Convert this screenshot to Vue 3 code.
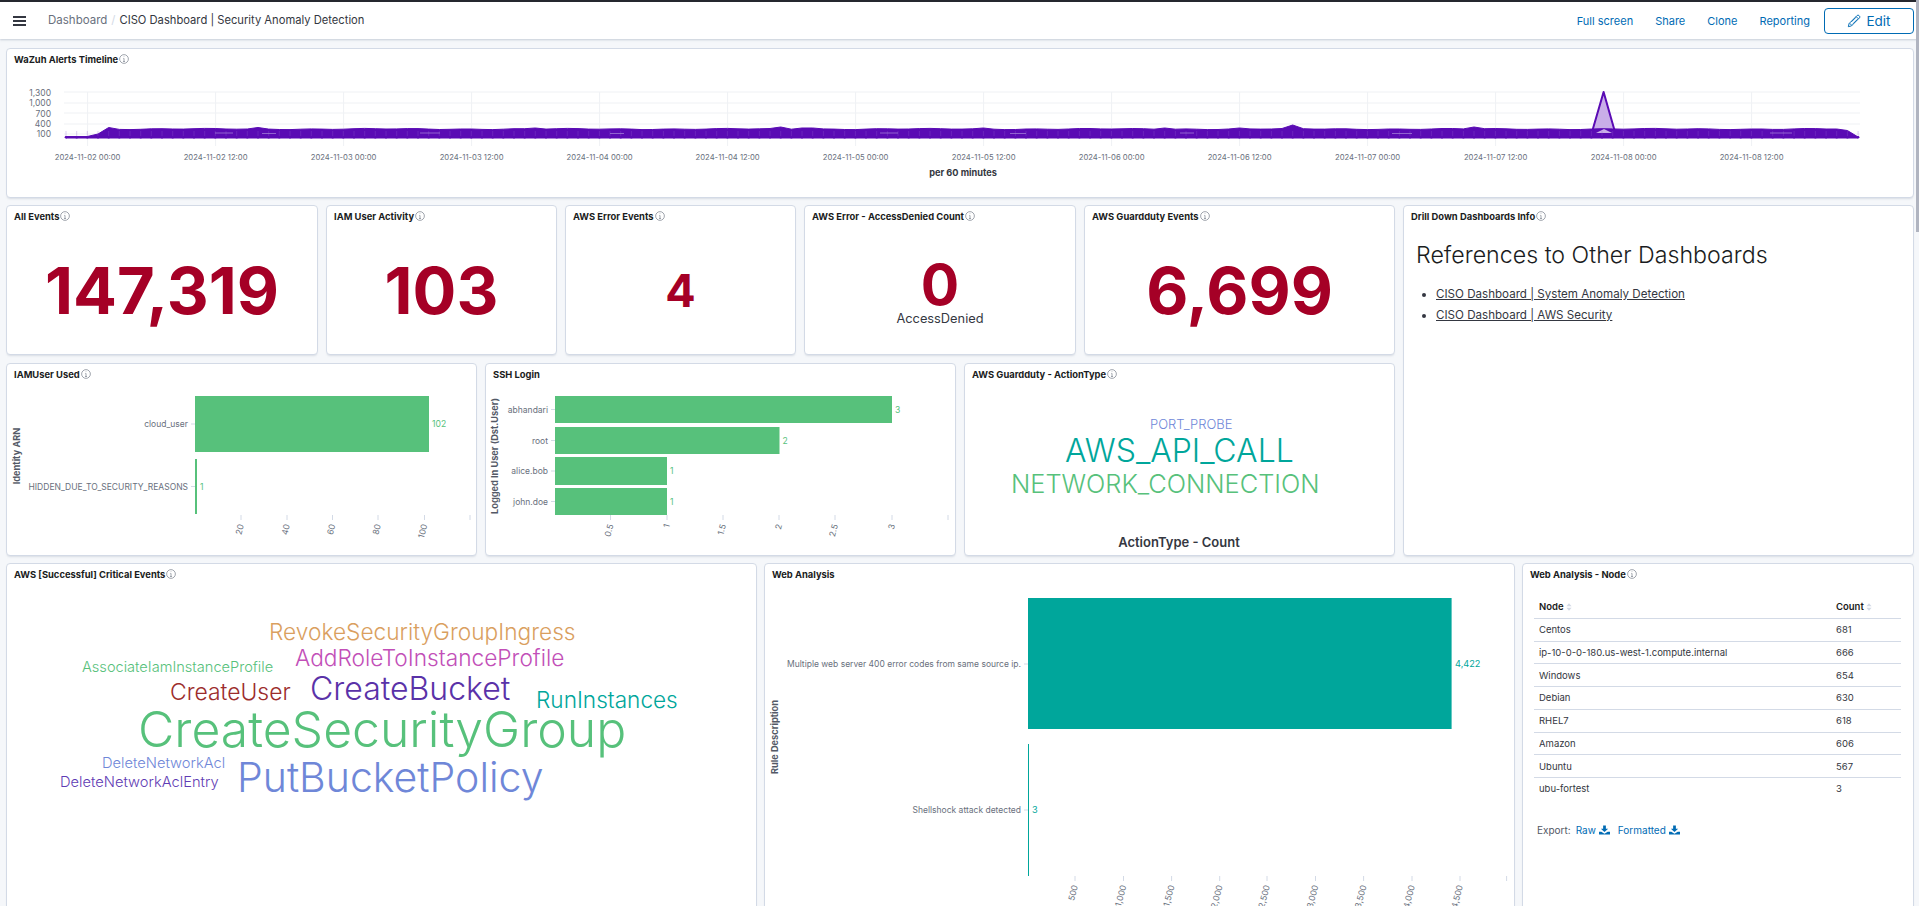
<template>
  <div class="app">
    <header class="topbar">
      <button class="menu-btn" aria-label="Menu"><span></span><span></span><span></span></button>
      <nav class="crumbs">
        <span class="crumb-root">Dashboard</span>
        <span class="crumb-sep">/</span>
        <span class="crumb-current">CISO Dashboard | Security Anomaly Detection</span>
      </nav>
      <div class="actions">
        <a class="action">Full screen</a>
        <a class="action">Share</a>
        <a class="action">Clone</a>
        <a class="action">Reporting</a>
        <button class="edit-btn">
          <svg width="14" height="14" viewBox="0 0 16 16" fill="none" stroke="currentColor" stroke-width="1.1">
            <path d="M1.5 14.5l.9-3.6L11.6 1.7a1.4 1.4 0 0 1 2 0l.7.7a1.4 1.4 0 0 1 0 2l-9.2 9.2-3.600.9z" />
            <path d="M3 10.500L5.500 13M10.500 3l2.500 2.500M5 9l5-5M7 11l5-5" />
          </svg>
          Edit
        </button>
      </div>
    </header>

    <main class="dashboard">
      <section class="panel timeline">
        <h3 class="panel-title">WaZuh Alerts Timeline<svg class="info" viewBox="0 0 16 16"><circle cx="8" cy="8" r="7" /><path d="M8 7v5M6.500 12h3M7 7h1M8 4v.8" /></svg></h3>
        <svg class="chart" width="1906" height="122" viewBox="7 75 1906 122">
          <line v-for="y in [92, 103, 113, 124, 134]" :key="y" x1="64" x2="1860" :y1="y" :y2="y" class="grid" />
          <line v-for="t in timeLabels" :key="t.label" :x1="t.x" :x2="t.x" y1="92" y2="146" class="grid" />
          <text v-for="a in timeAxis" :key="a.label" x="51" :y="a.y" class="tick" text-anchor="end">{{ a.label }}</text>
          <text v-for="t in timeLabels" :key="t.label + 'l'" :x="t.x" y="159.500" class="tick tick-time" text-anchor="middle">{{ t.label }}</text>
          <text x="963" y="176" class="axis-title" text-anchor="middle">per 60 minutes</text>

          <polygon points="1592,132 1603.600,92 1615,132" class="spike" />
          <polygon :points="bandPoints" class="band" />
          <polygon points="1596,133 1604,129 1612,133" class="spike-inner" />
          <line v-for="x in hourTicks" :key="x" :x1="x" :x2="x" y1="131" y2="137" class="hour-line" />
          <line v-for="s in streaks" :key="s.x" :x1="s.x" :x2="s.x + s.w" :y1="s.y" :y2="s.y" class="streak" />
          <circle v-for="x in hourTicks" :key="'d' + x" :cx="x" cy="137.300" r="1.300" class="dot" />
        </svg>
      </section>

      <div class="row">
        <div class="left-col">
          <div class="metrics">
            <section v-for="m in metrics" :key="m.title" class="panel metric" :class="m.cls">
              <h3 class="panel-title">{{ m.title }}<svg class="info" viewBox="0 0 16 16"><circle cx="8" cy="8" r="7" /><path d="M8 7v5M6.500 12h3M7 7h1M8 4v.8" /></svg></h3>
              <div class="metric-body">
                <div class="metric-value" :class="m.size">{{ m.value }}</div>
                <div v-if="m.label" class="metric-label">{{ m.label }}</div>
              </div>
            </section>
          </div>
          <div class="charts">
            <section v-for="c in barCharts" :key="c.title" class="panel" :class="c.cls">
              <h3 class="panel-title">{{ c.title }}<svg v-if="c.info" class="info" viewBox="0 0 16 16"><circle cx="8" cy="8" r="7" /><path d="M8 7v5M6.500 12h3M7 7h1M8 4v.8" /></svg></h3>
              <svg class="chart" :width="c.w" height="165" :viewBox="`${c.x} 390 ${c.w} 165`">
                <text :transform="`translate(${c.titleX} 456) rotate(-90)`" class="axis-title y-title" text-anchor="middle">{{ c.yTitle }}</text>
                <template v-for="b in c.bars" :key="b.label">
                  <rect :x="c.base" :y="b.y" :width="b.w" :height="b.h" class="bar-green" />
                  <line :x1="c.base - 4" :x2="c.base" :y1="b.y + b.h / 2" :y2="b.y + b.h / 2" class="tickmark" />
                  <text :x="c.base - 7" :y="b.y + b.h / 2 + 3" class="tick" text-anchor="end">{{ b.label }}</text>
                  <text :x="c.base + b.w + 3" :y="b.y + b.h / 2 + 3" class="value-green">{{ b.value }}</text>
                </template>
                <template v-for="t in c.ticks" :key="t.x">
                  <line :x1="t.x" :x2="t.x" y1="515" y2="520" class="tickmark" />
                  <text :transform="`translate(${t.x + 3} 525) rotate(-75)`" class="tick" text-anchor="end">{{ t.label }}</text>
                </template>
                <line :x1="c.lastTick" :x2="c.lastTick" y1="515" y2="520" class="tickmark" />
              </svg>
            </section>
            <section class="panel action-type">
              <h3 class="panel-title">AWS Guardduty - ActionType<svg class="info" viewBox="0 0 16 16"><circle cx="8" cy="8" r="7" /><path d="M8 7v5M6.500 12h3M7 7h1M8 4v.8" /></svg></h3>
              <svg class="chart" width="429" height="165" viewBox="965 390 429 165">
                <text v-for="w in actionWords" :key="w.text" :x="w.x" :y="w.y" :font-size="w.size" :fill="w.color" class="cloud-word">{{ w.text }}</text>
                <text x="1179" y="547" class="cloud-title" text-anchor="middle">ActionType - Count</text>
              </svg>
            </section>
          </div>
        </div>

        <section class="panel drill">
          <h3 class="panel-title">Drill Down Dashboards Info<svg class="info" viewBox="0 0 16 16"><circle cx="8" cy="8" r="7" /><path d="M8 7v5M6.500 12h3M7 7h1M8 4v.8" /></svg></h3>
          <div class="drill-body">
            <h1>References to Other Dashboards</h1>
            <ul>
              <li><a>CISO Dashboard | System Anomaly Detection</a></li>
              <li><a>CISO Dashboard | AWS Security</a></li>
            </ul>
          </div>
        </section>
      </div>

      <div class="row bottom">
        <section class="panel critical">
          <h3 class="panel-title">AWS [Successful] Critical Events<svg class="info" viewBox="0 0 16 16"><circle cx="8" cy="8" r="7" /><path d="M8 7v5M6.500 12h3M7 7h1M8 4v.8" /></svg></h3>
          <svg class="chart" width="749" height="340" viewBox="7 590 749 340">
            <text v-for="w in criticalWords" :key="w.text" :x="w.x" :y="w.y" :font-size="w.size" :fill="w.color" class="cloud-word">{{ w.text }}</text>
          </svg>
        </section>

        <section class="panel web">
          <h3 class="panel-title">Web Analysis</h3>
          <svg class="chart" width="749" height="340" viewBox="765 590 749 340">
            <text transform="translate(778 737) rotate(-90)" class="axis-title y-title" text-anchor="middle">Rule Description</text>
            <rect x="1028" y="598" width="423.600" height="131" class="bar-teal" />
            <rect x="1028" y="744" width="1" height="132" class="bar-teal" />
            <line x1="1024" x2="1028" y1="664" y2="664" class="tickmark" />
            <line x1="1024" x2="1028" y1="810" y2="810" class="tickmark" />
            <text x="1021" y="667" class="tick" text-anchor="end">Multiple web server 400 error codes from same source ip.</text>
            <text x="1021" y="813" class="tick" text-anchor="end">Shellshock attack detected</text>
            <text x="1455" y="667" class="value-teal">4,422</text>
            <text x="1032" y="813" class="value-teal">3</text>
            <template v-for="t in webTicks" :key="t.x">
              <line :x1="t.x" :x2="t.x" y1="876" y2="881" class="tickmark" />
              <text :transform="`translate(${t.x + 3} 886) rotate(-75)`" class="tick" text-anchor="end">{{ t.label }}</text>
            </template>
            <line x1="1506.600" x2="1506.600" y1="876" y2="881" class="tickmark" />
          </svg>
        </section>

        <section class="panel node">
          <h3 class="panel-title">Web Analysis - Node<svg class="info" viewBox="0 0 16 16"><circle cx="8" cy="8" r="7" /><path d="M8 7v5M6.500 12h3M7 7h1M8 4v.8" /></svg></h3>
          <div class="node-body">
            <table>
              <thead>
                <tr>
                  <th class="col-node">Node<svg class="sort" viewBox="0 0 8 10"><path d="M4 0l3.500 4h-7zM4 10L.5 6h7z" /></svg></th>
                  <th>Count<svg class="sort" viewBox="0 0 8 10"><path d="M4 0l3.500 4h-7zM4 10L.5 6h7z" /></svg></th>
                </tr>
              </thead>
              <tbody>
                <tr v-for="n in nodes" :key="n.name">
                  <td>{{ n.name }}</td>
                  <td>{{ n.count }}</td>
                </tr>
              </tbody>
            </table>
            <div class="export">
              Export:
              <a>Raw<svg class="dl" viewBox="0 0 12 10"><path d="M4.500 0h3v3.500H10L6 7.200 2 3.500h2.500zM0 7h2.500L6 9 9.500 7H12v3H0z" /></svg></a>
              <a>Formatted<svg class="dl" viewBox="0 0 12 10"><path d="M4.500 0h3v3.500H10L6 7.200 2 3.500h2.500zM0 7h2.500L6 9 9.500 7H12v3H0z" /></svg></a>
            </div>
          </div>
        </section>
      </div>
    </main>

    <div class="scroll-thumb"></div>
  </div>
</template>

<script setup>
const metrics = [
  { title: 'All Events', value: '147,319', cls: 'm-all', size: 'big' },
  { title: 'IAM User Activity', value: '103', cls: 'm-iam', size: 'big' },
  { title: 'AWS Error Events', value: '4', cls: 'm-err', size: 'small' },
  { title: 'AWS Error - AccessDenied Count', value: '0', label: 'AccessDenied', cls: 'm-denied', size: 'mid' },
  { title: 'AWS Guardduty Events', value: '6,699', cls: 'm-guard', size: 'big' }
]

const barCharts = [
  {
    title: 'IAMUser Used', info: true, cls: 'c-iam', x: 7, w: 469, base: 195, titleX: 20, yTitle: 'Identity ARN', lastTick: 470,
    bars: [
      { label: 'cloud_user', value: '102', y: 396, h: 56, w: 234 },
      { label: 'HIDDEN_DUE_TO_SECURITY_REASONS', value: '1', y: 459, h: 55, w: 2 }
    ],
    ticks: [
      { x: 241, label: '20' }, { x: 287, label: '40' }, { x: 332.5, label: '60' },
      { x: 378, label: '80' }, { x: 424.5, label: '100' }
    ]
  },
  {
    title: 'SSH Login', info: false, cls: 'c-ssh', x: 486, w: 469, base: 555, titleX: 498, yTitle: 'Logged In User (Dst.User)', lastTick: 948,
    bars: [
      { label: 'abhandari', value: '3', y: 396, h: 27, w: 337 },
      { label: 'root', value: '2', y: 427, h: 27, w: 224.5 },
      { label: 'alice.bob', value: '1', y: 457, h: 28, w: 112 },
      { label: 'john.doe', value: '1', y: 488, h: 27, w: 112 }
    ],
    ticks: [
      { x: 610.5, label: '0.5' }, { x: 667, label: '1' }, { x: 723, label: '1.5' },
      { x: 779, label: '2' }, { x: 835, label: '2.5' }, { x: 892, label: '3' }
    ]
  }
]

const actionWords = [
  { text: 'PORT_PROBE', x: 1150, y: 429, size: 13, color: '#6f87d8' },
  { text: 'AWS_API_CALL', x: 1065, y: 462, size: 32, color: '#00a69b' },
  { text: 'NETWORK_CONNECTION', x: 1011, y: 493, size: 25.4, color: '#57c17b' }
]

const criticalWords = [
  { text: 'RevokeSecurityGroupIngress', x: 269, y: 640, size: 22.7, color: '#da9f5f' },
  { text: 'AddRoleToInstanceProfile', x: 295, y: 666, size: 22.7, color: '#c24fb8' },
  { text: 'AssociateIamInstanceProfile', x: 82, y: 672, size: 14.6, color: '#57c17b' },
  { text: 'CreateUser', x: 170, y: 700, size: 22.9, color: '#9c2c2c' },
  { text: 'CreateBucket', x: 310, y: 700, size: 32, color: '#5a32a8' },
  { text: 'RunInstances', x: 536, y: 708, size: 22.6, color: '#00a69b' },
  { text: 'CreateSecurityGroup', x: 138, y: 747, size: 49.9, color: '#57c17b' },
  { text: 'DeleteNetworkAcl', x: 102, y: 768, size: 14.7, color: '#6f87d8' },
  { text: 'DeleteNetworkAclEntry', x: 60, y: 787, size: 14.7, color: '#5f3cb4' },
  { text: 'PutBucketPolicy', x: 237, y: 792, size: 41, color: '#6f87d8' }
]

const webTicks = [
  { x: 1075, label: '500' }, { x: 1123.5, label: '1,000' }, { x: 1171.6, label: '1,500' },
  { x: 1219.7, label: '2,000' }, { x: 1267, label: '2,500' }, { x: 1315.5, label: '3,000' },
  { x: 1363.6, label: '3,500' }, { x: 1412, label: '4,000' }, { x: 1460, label: '4,500' }
]

const nodes = [
  { name: 'Centos', count: 681 },
  { name: 'ip-10-0-0-180.us-west-1.compute.internal', count: 666 },
  { name: 'Windows', count: 654 },
  { name: 'Debian', count: 630 },
  { name: 'RHEL7', count: 618 },
  { name: 'Amazon', count: 606 },
  { name: 'Ubuntu', count: 567 },
  { name: 'ubu-fortest', count: 3 }
]

const timeAxis = [
  { label: '1,300', y: 96 }, { label: '1,000', y: 106 }, { label: '700', y: 117 },
  { label: '400', y: 127 }, { label: '100', y: 137 }
]

const days = ['02', '03', '04', '05', '06', '07', '08']
const timeLabels = []
days.forEach((d, i) => {
  timeLabels.push({ x: 87.6 + i * 256, label: `2024-11-${d} 00:00` })
  timeLabels.push({ x: 215.6 + i * 256, label: `2024-11-${d} 12:00` })
})

// hourly points, bumps are read off the reference
const HOUR = 10.667
const bumps = { 4: 127.5, 18: 127.5, 67: 127, 69: 128, 70: 128, 103: 128, 110: 128, 115: 125, 132: 127, 86: 128, 44: 128 }
const top = []
for (let i = 0; i <= 168; i++) {
  let y = 129 + 0.35 * Math.sin(i * 1.3) + 0.3 * Math.sin(i * 0.37)
  if (bumps[i]) y = bumps[i]
  if (i < 3) y = 136.500
  if (i === 3) y = 134
  if (i === 167) y = 130.5
  if (i === 168) y = 137
  top.push(`${(66 + i * HOUR).toFixed(1)},${y.toFixed(1)}`)
}
const bandPoints = [...top, '1858,138', '66,138'].join(' ')
const hourTicks = []
for (let i = 0; i <= 168; i++) hourTicks.push(+(66 + i * HOUR).toFixed(1))

const streaks = [
  { x: 215, w: 18, y: 133 }, { x: 262, w: 14, y: 133.500 }, { x: 420, w: 20, y: 133 },
  { x: 610, w: 14, y: 133.500 }, { x: 880, w: 18, y: 133 }, { x: 1010, w: 16, y: 133.500 },
  { x: 1180, w: 14, y: 133 }, { x: 1392, w: 20, y: 133.500 }, { x: 1770, w: 22, y: 133 }
]
</script>

<style>
html, body {
  margin: 0;
  height: 100%;
  overflow: hidden;
  background: #f5f7fa;
}
</style>

<style scoped>
.app {
  position: relative;
  height: 906px;
  overflow: hidden;
  font-family: Inter, "Liberation Sans", sans-serif;
  color: #343741;
}

.topbar {
  display: flex;
  align-items: center;
  height: 37px;
  border-top: 2px solid #25282f;
  background: #fff;
  box-shadow: 0 1px 2px rgba(152, 162, 179, 0.5);
  padding: 0 5px 0 13px;
}

.menu-btn {
  display: flex;
  flex-direction: column;
  gap: 2px;
  width: 13px;
  padding: 0;
  border: 0;
  background: none;
}

.menu-btn span {
  height: 2px;
  background: #343741;
}

.crumbs {
  display: flex;
  align-items: center;
  gap: 4px;
  margin-left: 22px;
  margin-top: -1px;
  font-size: 11.5px;
}

.crumb-root { color: #69707d; }
.crumb-sep { color: #d3dae6; }
.crumb-current { color: #343741; font-size: 11.2px; }

.actions {
  display: flex;
  align-items: center;
  gap: 22px;
  margin-left: auto;
}

.action {
  font-size: 11px;
  color: #006bb4;
}

.edit-btn {
  display: flex;
  align-items: center;
  justify-content: center;
  gap: 5px;
  width: 90px;
  height: 26px;
  margin-left: -8px;
  border: 1px solid #006bb4;
  border-radius: 4px;
  background: #fff;
  color: #006bb4;
  font-family: inherit;
  font-size: 13.5px;
}

.dashboard {
  display: flex;
  flex-direction: column;
  gap: 7px;
  padding: 9px 5px 0 6px;
}

.panel {
  box-sizing: border-box;
  background: #fff;
  border: 1px solid #d3dae6;
  border-radius: 4px;
  box-shadow: 0 2px 2px -1px rgba(152, 162, 179, 0.3);
  overflow: hidden;
}

.panel-title {
  display: flex;
  align-items: center;
  gap: 1px;
  height: 26px;
  margin: 0;
  padding: 0 7px 6px;
  font-size: 9.400px;
  font-weight: 700;
  color: #1a1c21;
  box-sizing: border-box;
}

.info {
  width: 10px;
  height: 10px;
  fill: none;
  stroke: #69707d;
  stroke-width: 1;
}

.chart { display: block; }

.timeline { height: 150px; }

.row {
  display: flex;
  gap: 8px;
}

.left-col {
  display: flex;
  flex-direction: column;
  gap: 8px;
  width: 1389px;
}

.metrics, .charts {
  display: flex;
  gap: 8px;
}

.metric {
  display: flex;
  flex-direction: column;
  height: 150px;
}

.m-all { width: 312px; }
.m-iam { width: 231px; }
.m-err { width: 231px; }
.m-denied { width: 272px; }
.m-guard { width: 311px; }

.metric-body {
  flex: 1;
  display: flex;
  flex-direction: column;
  align-items: center;
  justify-content: center;
  padding-bottom: 5px;
}

.metric-value {
  font-weight: 700;
  color: #a50026;
  line-height: 1;
}

.big { font-size: 65px; }
.mid { font-size: 57px; }
.small { font-size: 45px; }

.metric-label {
  margin-top: -2px;
  font-size: 12.8px;
  color: #343741;
}

.charts .panel { height: 193px; }
.c-iam { width: 471px; }
.c-ssh { width: 471px; }
.action-type { width: 431px; }

.drill { flex: 1; }

.drill-body {
  padding: 9px 12px;
}

.drill-body h1 {
  margin: 0 0 15px;
  font-size: 23.200px;
  font-weight: 300;
  color: #1a1c21;
}

.drill-body ul {
  margin: 0;
  padding-left: 20px;
  font-size: 11.600px;
  line-height: 21px;
}

.drill-body a {
  color: #343741;
  text-decoration: underline;
}

.bottom { gap: 7px; }
.bottom .panel { height: 420px; }
.critical { width: 751px; }
.web { width: 751px; }
.node { flex: 1; }

.node-body {
  padding: 6px 12px 0 11px;
}

table {
  width: 100%;
  table-layout: fixed;
  border-collapse: collapse;
  font-size: 9.500px;
}

th, td {
  height: 21.750px;
  padding: 0 5px;
  text-align: left;
  border-bottom: 1px solid #d3dae6;
}

tbody tr:last-child td { border-bottom: 0; }

th {
  font-weight: 600;
  color: #1a1c21;
}

.col-node { width: 287px; }

.sort {
  width: 6px;
  height: 8px;
  margin-left: 2px;
  vertical-align: -1px;
  fill: #d3dae6;
}

.export {
  display: flex;
  align-items: center;
  gap: 5px;
  margin: 24px 0 0 3px;
  font-size: 10px;
  color: #535966;
}

.export a {
  display: flex;
  align-items: center;
  gap: 3px;
  margin-right: 3px;
  color: #006bb4;
}

.dl {
  width: 11px;
  height: 10px;
  fill: #006bb4;
}

.grid { stroke: #eff1f4; stroke-width: 1; }
.tick { font-size: 8.500px; fill: #69707d; }
.tick-time { font-size: 7.700px; }
.axis-title { font-size: 9.200px; font-weight: 700; fill: #343741; }
.y-title { fill: #535966; }
.tickmark { stroke: #d3dae6; stroke-width: 1; }
.band { fill: #5a0bb4; stroke: #5a0bb4; stroke-width: 1; }
.spike { fill: #c9aee8; stroke: #5a0bb4; stroke-width: 2; stroke-linejoin: round; }
.spike-inner { fill: #c9aee8; }
.hour-line { stroke: #8f5cd0; stroke-width: 1; opacity: 0.3; }
.streak { stroke: #a987dc; stroke-width: 1; opacity: 0.7; }
.dot { fill: #5a0bb4; }
.bar-green { fill: #57c17b; }
.bar-teal { fill: #00a69b; }
.value-green { font-size: 8.600px; fill: #57c17b; }
.value-teal { font-size: 9.200px; fill: #00a69b; }
.cloud-word { font-weight: 300; }
.cloud-title { font-size: 13px; font-weight: 600; fill: #343741; }

.scroll-thumb {
  position: absolute;
  top: 0;
  right: 0;
  width: 3px;
  height: 232px;
  background: #b0b4c0;
}
</style>
